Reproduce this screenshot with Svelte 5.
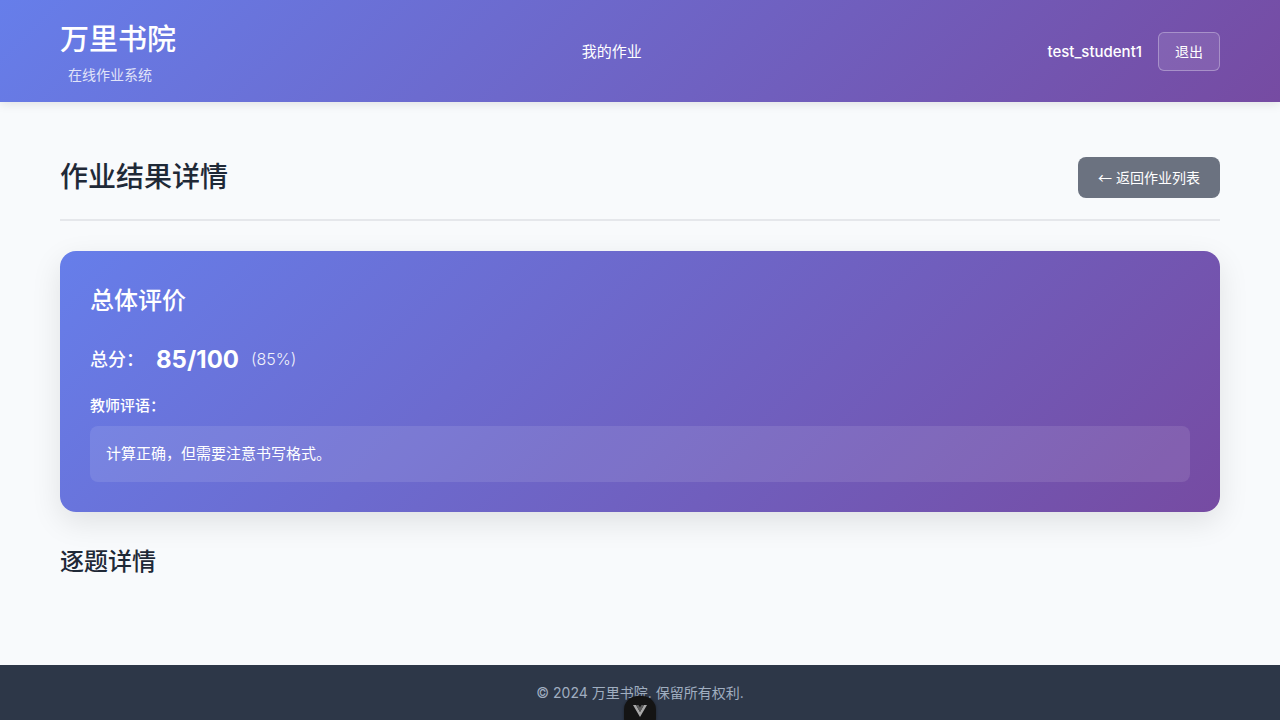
<script>
  const score = 85;
  const total = 100;
</script>

<div class="page">
  <header>
    <div class="wrap bar">
      <div class="brand">
        <h1>万里书院</h1>
        <span class="sub">在线作业系统</span>
      </div>
      <nav><a href="#homework">我的作业</a></nav>
      <div class="user">
        <span class="name">test_student1</span>
        <button class="logout">退出</button>
      </div>
    </div>
  </header>

  <main class="wrap">
    <div class="heading">
      <h2>作业结果详情</h2>
      <button class="back"><span class="arrow">←</span> 返回作业列表</button>
    </div>
    <section class="summary">
      <h3>总体评价</h3>
      <div class="score">
        <span class="label">总分：</span>
        <span class="value">{score}/{total}</span>
        <span class="percent">({Math.round((score / total) * 100)}%)</span>
      </div>
      <h4>教师评语：</h4>
      <p>计算正确，但需要注意书写格式。</p>
    </section>
    <h3 class="details">逐题详情</h3>
  </main>

  <footer>© 2024 万里书院. 保留所有权利.</footer>

  <button class="devtools" aria-label="Vue DevTools">
    <svg viewBox="0 0 16 14" width="16" height="14" aria-hidden="true">
      <path d="M1 1h3l4 7 4-7h3L8 13z" fill="#a8a8a8" />
      <path d="M4 1h2.500L8 3.500 9.500 1H12L8 8z" fill="#5c5c5c" />
    </svg>
  </button>
</div>

<style>
  :global(body) {
    font-family: Inter, "Noto Sans CJK SC", sans-serif;
    background: #f8fafc;
    color: #1f2937;
  }
  .page {
    min-height: 100vh;
    display: flex;
    flex-direction: column;
  }
  .page * {
    box-sizing: border-box;
  }
  h1, h2, h3, h4, p {
    margin: 0;
  }
  button {
    font-family: inherit;
    cursor: pointer;
  }
  .wrap {
    width: 100%;
    max-width: 1200px;
    margin: 0 auto;
    padding: 0 20px;
  }
  header {
    background: linear-gradient(135deg, #667eea 0%, #764ba2 100%);
    box-shadow: 0 2px 10px rgba(0, 0, 0, 0.1);
    color: #fff;
  }
  .bar {
    display: flex;
    justify-content: space-between;
    align-items: center;
    padding-top: 16px;
    padding-bottom: 16px;
  }
  .brand {
    display: flex;
    flex-direction: column;
  }
  h1 {
    font-size: 29px;
    line-height: 48px;
    font-weight: 500;
  }
  .sub {
    margin-left: 8px;
    font-size: 14px;
    line-height: 22px;
    opacity: 0.8;
  }
  nav {
    line-height: 24px;
  }
  nav a {
    color: #fff;
    font-size: 15px;
    text-decoration: none;
  }
  .user {
    display: flex;
    align-items: center;
    gap: 16px;
  }
  .name {
    font-size: 15px;
    font-weight: 500;
  }
  .logout {
    padding: 8px 16px;
    border: 1px solid rgba(255, 255, 255, 0.3);
    border-radius: 6px;
    background: rgba(255, 255, 255, 0.1);
    color: #fff;
    font-size: 14px;
    line-height: 21px;
  }
  main {
    flex: 1;
  }
  .heading {
    display: flex;
    justify-content: space-between;
    align-items: center;
    margin-top: 53px;
    margin-bottom: 30px;
    padding-bottom: 20px;
    border-bottom: 2px solid #e5e7eb;
  }
  h2 {
    font-size: 28px;
    line-height: 44px;
    font-weight: 500;
  }
  .back {
    padding: 10px 20px;
    border: 0;
    border-radius: 8px;
    background: #6b7280;
    color: #fff;
    font-size: 14px;
    line-height: 20px;
  }
  .arrow {
    font-family: "Noto Sans CJK SC", sans-serif;
  }
  .summary {
    padding: 30px;
    border-radius: 16px;
    background: linear-gradient(135deg, #667eea 0%, #764ba2 100%);
    box-shadow: 0 10px 30px rgba(0, 0, 0, 0.1);
    color: #fff;
  }
  h3 {
    font-size: 24px;
    line-height: 40px;
    font-weight: 500;
  }
  .score {
    display: flex;
    align-items: center;
    margin-top: 20px;
    line-height: 37px;
  }
  .label {
    margin-right: 12px;
    font-size: 18px;
    font-weight: 500;
  }
  .value {
    margin-right: 12px;
    font-size: 24px;
    font-weight: 700;
  }
  .percent {
    font-size: 16px;
    font-weight: 300;
    opacity: 0.9;
  }
  h4 {
    margin-top: 16px;
    margin-bottom: 8px;
    font-size: 15px;
    line-height: 24px;
    font-weight: 500;
  }
  .summary p {
    padding: 16px;
    border-radius: 8px;
    background: rgba(255, 255, 255, 0.1);
    font-size: 15px;
    line-height: 24px;
  }
  .details {
    margin-top: 30px;
  }
  footer {
    padding: 16px;
    background: #2d3748;
    color: #a0aec0;
    font-size: 14px;
    line-height: 23px;
    text-align: center;
  }
  .devtools {
    position: fixed;
    left: 50%;
    bottom: -12px;
    width: 32px;
    height: 36px;
    margin-left: -16px;
    padding: 8px 8px 14px;
    border: 0;
    border-radius: 14px;
    background: #141414;
    box-shadow: 0 0 3px rgba(0, 0, 0, 0.4);
  }
  .devtools svg {
    display: block;
  }
</style>
